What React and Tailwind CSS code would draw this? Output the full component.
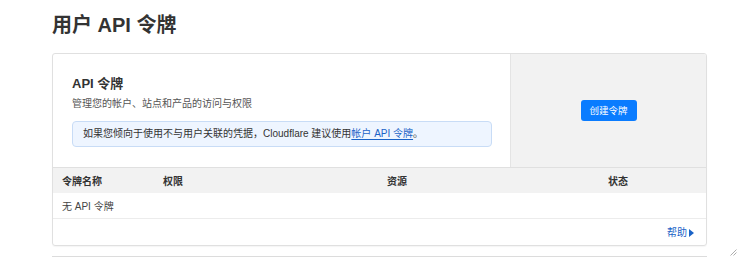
import React from 'react';

const COLUMNS = [
  { label: '令牌名称', width: 'w-[101px]' },
  { label: '权限', width: 'w-[224px]' },
  { label: '资源', width: 'w-[221px]' },
  { label: '状态', width: 'flex-1' },
];

const App = () => {
  return (
    <div className="w-[738px] h-[257px] overflow-hidden bg-white relative font-['Liberation_Sans','Noto_Sans_CJK_SC',sans-serif] text-[#313131]">
      <div className="pl-[52px] pt-[11px]">
        {/* Page title */}
        <h1 className="text-[20px] leading-[28px] font-bold text-[#333]">用户 API 令牌</h1>

        {/* Card */}
        <div className="mt-[14px] w-[655px] h-[193px] border border-[#e0e0e0] rounded-[3px] flex flex-col overflow-hidden shadow-[0_1px_1px_rgba(0,0,0,0.04)]">
          <div className="flex h-[113px]">
            <div className="w-[457px] pl-[19px] pr-[18px] pt-[21px]">
              <h2 className="text-[13px] leading-[18px] font-bold text-[#333]">API 令牌</h2>
              <p className="mt-[4px] text-[10px] leading-[14px] text-[#555]">管理您的帐户、站点和产品的访问与权限</p>
              <div className="mt-[10px] h-[26px] border border-[#c8dcf6] bg-[#eef5ff] rounded-[4px] pl-[10px] text-[10px] leading-[24px] text-[#333] whitespace-nowrap">
                如果您倾向于使用不与用户关联的凭据，Cloudflare 建议使用<a className="text-[#1a63c7] underline underline-offset-2 decoration-[#1a63c7]">帐户 API 令牌</a>。
              </div>
            </div>
            <div className="flex-1 bg-[#f2f2f2] border-l border-[#e4e4e4] flex items-center justify-center">
              <button className="w-[56px] h-[21px] rounded-[3px] bg-[#0a7cff] text-white text-[9.5px] leading-[21px]">创建令牌</button>
            </div>
          </div>

          {/* Table header */}
          <div className="flex h-[26px] items-center pt-[1px] bg-[#f2f2f2] border-t border-[#e0e0e0] pl-[9px] text-[10px] font-bold text-[#333]">
            {COLUMNS.map(c => (
              <div key={c.label} className={c.width}>{c.label}</div>
            ))}
          </div>

          {/* Empty row */}
          <div className="h-[26px] flex items-center pt-[2px] pl-[9px] text-[10px] text-[#444] border-b border-[#ececec]">无 API 令牌</div>

          {/* Footer */}
          <div className="flex-1 flex items-center justify-end pt-[1px] pr-[12px] text-[10px] text-[#1a63c7]">
            <span>帮助</span>
            <svg className="ml-[2px]" width="5" height="8" viewBox="0 0 5 8"><path d="M0 0L5 4L0 8Z" fill="#1a63c7" /></svg>
          </div>
        </div>

        {/* Next card edge */}
        <div className="mt-[10px] w-[655px] border-t border-[#dcdcdc]" />
      </div>

      {/* Resize grip */}
      <svg className="absolute right-[1px] bottom-[1px]" width="7" height="7" viewBox="0 0 7 7">
        <path d="M6.5 0.5L0.5 6.5M6.5 3.5L3.5 6.5" stroke="#999" strokeWidth="0.8" />
      </svg>
    </div>
  );
};

export default App;
